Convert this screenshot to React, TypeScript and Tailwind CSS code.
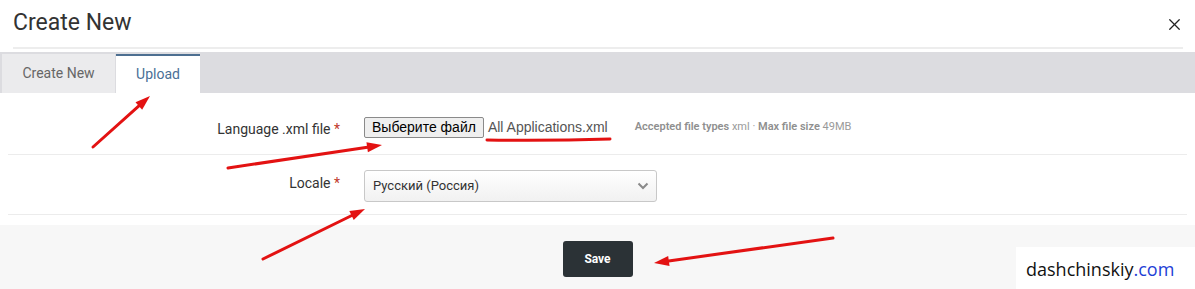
import { X } from "lucide-react";

type Arrow = { x1: number; y1: number; x2: number; y2: number };

const arrows: Arrow[] = [
  { x1: 93, y1: 147, x2: 150, y2: 96 },
  { x1: 228, y1: 168, x2: 382, y2: 145 },
  { x1: 263, y1: 259, x2: 365, y2: 209 },
  { x1: 833, y1: 238, x2: 654, y2: 263 },
];

function ArrowShape({ x1, y1, x2, y2 }: Arrow) {
  const dx = x2 - x1;
  const dy = y2 - y1;
  const len = Math.hypot(dx, dy);
  const ux = dx / len;
  const uy = dy / len;
  const head = 15;
  const half = 5;
  const bx = x2 - ux * head;
  const by = y2 - uy * head;
  const pts = `${x2},${y2} ${bx - uy * half},${by + ux * half} ${bx + uy * half},${by - ux * half}`;
  return (
    <g>
      <line x1={x1} y1={y1} x2={bx + ux * 2} y2={by + uy * 2} stroke="#e31212" strokeWidth={3} strokeLinecap="round" />
      <polygon points={pts} fill="#e31212" />
    </g>
  );
}

export default function App() {
  return (
    <div className="relative w-[1195px] h-[289px] overflow-hidden bg-white font-['Roboto',sans-serif] text-[#333]">
      {/* Header */}
      <div className="flex items-center justify-between h-[47px] pl-[13px] pr-[11px]">
        <h2 className="text-[23px] leading-none text-[#333] -mt-[2px]">Create New</h2>
        <X className="w-[19px] h-[19px] text-[#222] mt-[1px]" strokeWidth={1.6} />
      </div>
      <div className="mx-[13px] mr-[12px] h-[2px] bg-[#ededed]" />

      {/* Tabs */}
      <div className="mt-[3px] flex items-end h-[41px] bg-[#dcdce0] pl-[2px]">
        <div className="flex items-center justify-center w-[113px] h-[39px] bg-[#ebebed] text-[14px] text-[#666]">
          Create New
        </div>
        <div className="flex items-center justify-center w-[84px] h-[39px] ml-[1px] bg-white border-t-2 border-[#4d6f91] text-[14px] text-[#4a6f96]">
          Upload
        </div>
      </div>

      {/* Form */}
      <div className="mx-[8px] mr-[8px]">
        <div className="flex items-center h-[62px] pt-[8px] border-b border-[#ececec]">
          <div className="w-[332px] text-right text-[14px] text-[#333] mt-[4px]">
            Language .xml file <span className="text-[#c0392b]">*</span>
          </div>
          <div className="ml-[24px] flex items-center">
            <span className="flex items-center h-[21px] px-[7px] bg-[#efefef] border border-[#8a8a8a] rounded-[2px] text-[14px] text-black font-['Liberation_Sans',sans-serif]">
              Выберите файл
            </span>
            <span className="ml-[4px] text-[14px] text-[#555] font-['Liberation_Sans',sans-serif]">All Applications.xml</span>
            <span className="ml-[27px] text-[11px] text-[#9a9a9a]">
              <b className="font-semibold text-[#8f8f8f]">Accepted file types</b> xml · <b className="font-semibold text-[#8f8f8f]">Max file size</b> 49MB
            </span>
          </div>
        </div>
        <div className="flex items-center h-[60px] pt-[2px] border-b border-[#ececec]">
          <div className="w-[332px] text-right text-[14px] text-[#333] -mt-[4px]">
            Locale <span className="text-[#c0392b]">*</span>
          </div>
          <div className="ml-[24px] flex items-center justify-between w-[293px] h-[32px] px-[8px] border border-[#c8c8c8] rounded-[3px] bg-gradient-to-b from-white to-[#f1f1f1]">
            <span className="text-[13px] text-[#333]">Русский (Россия)</span>
            <svg width="12" height="8" viewBox="0 0 12 8" className="mr-[-1px]">
              <path d="M1.5 1.5 L6 6 L10.5 1.5" fill="none" stroke="#8a8a8a" strokeWidth="2" />
            </svg>
          </div>
        </div>
      </div>

      {/* Footer */}
      <div className="mt-[10px] flex justify-center pt-[16px] h-[64px] bg-[#f7f7f7]">
        <button className="w-[70px] h-[36px] rounded-[3px] bg-[#2b3236] text-white text-[12px] font-bold">
          Save
        </button>
      </div>

      {/* Watermark */}
      <div className="absolute right-0 bottom-0 w-[179px] h-[42px] bg-white flex items-center pl-[10px] pt-[2px] font-['Open_Sans',sans-serif] text-[18px] font-medium">
        <span className="text-[#111]">dashchinskiy</span>
        <span className="text-[#1e40d6]">.com</span>
      </div>

      {/* Annotations */}
      <svg className="absolute inset-0 pointer-events-none" width="1195" height="289">
        <path d="M487 140 Q548 141 610 139" fill="none" stroke="#e31212" strokeWidth={3} strokeLinecap="round" />
        {arrows.map((a, i) => (
          <ArrowShape key={i} {...a} />
        ))}
      </svg>
    </div>
  );
}
